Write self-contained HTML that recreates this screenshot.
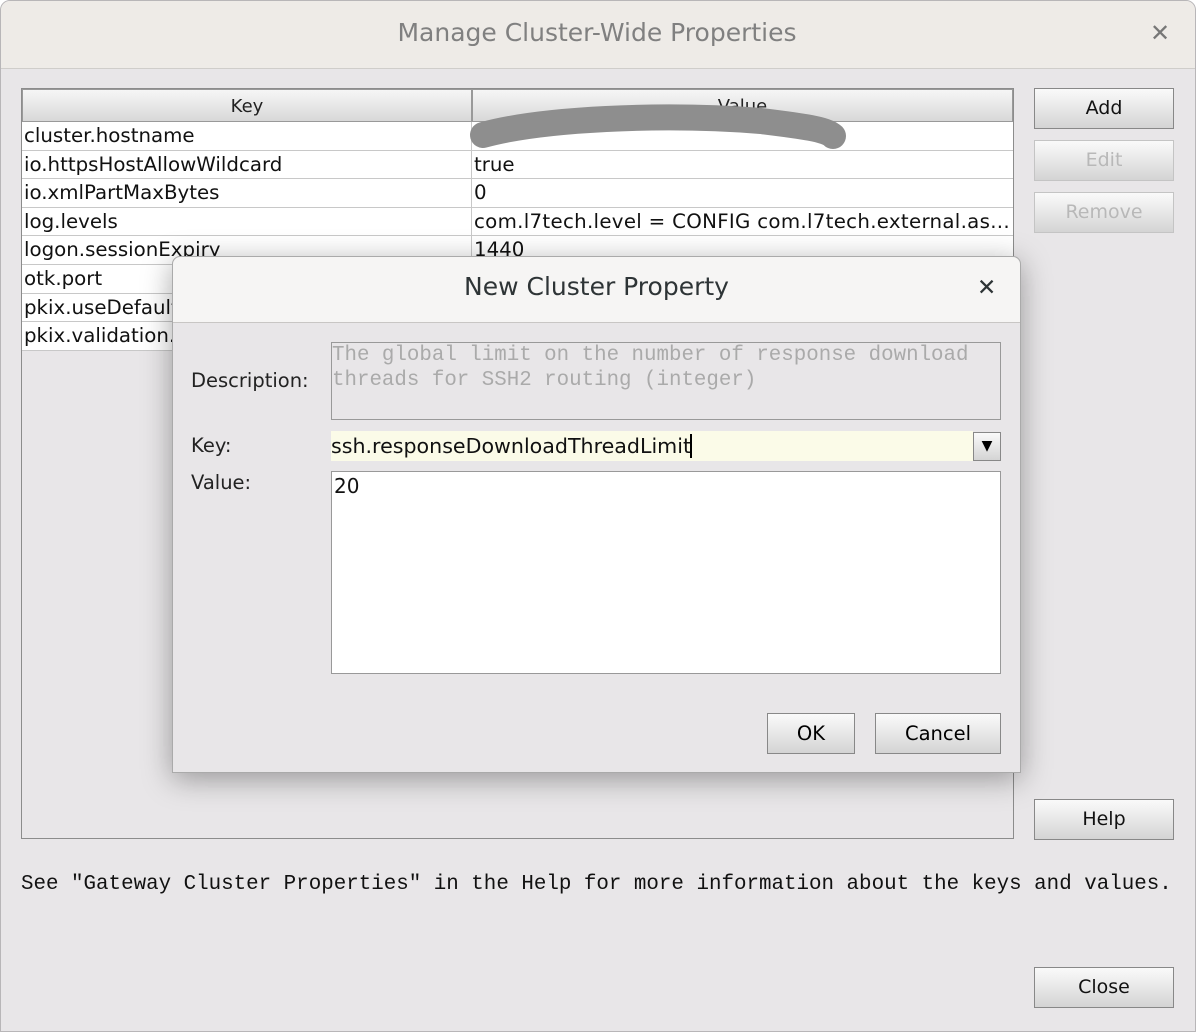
<!DOCTYPE html>
<html><head><meta charset="utf-8"><style>
*{margin:0;padding:0;box-sizing:border-box}
body{width:1196px;height:1032px;background:#fff;font-family:"DejaVu Sans","Liberation Sans",sans-serif;position:relative;overflow:hidden}
.win{position:absolute;left:0;top:0;width:1196px;height:1032px;background:#e8e6e8;border:1px solid #b8b6b8;border-radius:10px 10px 0 0;overflow:hidden}
.tb{position:absolute;left:0;top:0;width:100%;height:68px;background:#eeebe7;border-bottom:1px solid #cfcdca}
.abs{position:absolute}
.tbl{position:absolute;left:20px;top:87px;width:993px;height:751px;border:1px solid #8c8c8c;background:#e8e6e8}
.hdr{position:absolute;top:0;height:33px;background:linear-gradient(#f6f6f6,#d8d8d8);border:1px solid #999;font-size:18px;text-align:center;line-height:33px;color:#222}
.row{position:absolute;left:0;height:28.6px;background:#fff;border-bottom:1px solid #c8c8c8;font-size:19.8px;line-height:27px;color:#111;padding-left:2px;white-space:nowrap;overflow:hidden}
.btn{position:absolute;left:1033px;width:140px;height:41px;border:1px solid #888;background:linear-gradient(#fafafa,#d4d4d4);font-size:19px;text-align:center;line-height:39px;color:#111}
.dis{color:#b8b8b8;border-color:#c4c4c4}
.dlg{position:absolute;left:172px;top:256px;width:849px;height:517px;background:#e8e6e8;border:1px solid #aaa;border-radius:8px 8px 0 0;box-shadow:0 6px 30px rgba(0,0,0,.35)}
</style></head><body>
<div class="win">
<div class="tb"></div>
<div class="abs" style="left:0;width:1192px;top:17px;text-align:center;font-size:25px;color:#808080">Manage Cluster-Wide Properties</div>
<div class="abs" style="left:1149px;top:18px;font-size:24px;color:#777">✕</div>
<div class="tbl">
<div class="hdr" style="left:0;width:450px">Key</div>
<div class="hdr" style="left:450px;width:541px">Value</div>
<div class="row" style="top:33px;width:450px;border-right:1px solid #c8c8c8">cluster.hostname</div><div class="row" style="top:33px;left:450px;width:541px"></div>
<div class="row" style="top:61.6px;width:450px;border-right:1px solid #c8c8c8">io.httpsHostAllowWildcard</div><div class="row" style="top:61.6px;left:450px;width:541px">true</div>
<div class="row" style="top:90.2px;width:450px;border-right:1px solid #c8c8c8">io.xmlPartMaxBytes</div><div class="row" style="top:90.2px;left:450px;width:541px">0</div>
<div class="row" style="top:118.8px;width:450px;border-right:1px solid #c8c8c8">log.levels</div><div class="row" style="top:118.8px;left:450px;width:541px;letter-spacing:0.3px">com.l7tech.level = CONFIG com.l7tech.external.as...</div>
<div class="row" style="top:147.4px;width:450px;border-right:1px solid #c8c8c8">logon.sessionExpiry</div><div class="row" style="top:147.4px;left:450px;width:541px">1440</div>
<div class="row" style="top:176px;width:450px;border-right:1px solid #c8c8c8">otk.port</div><div class="row" style="top:176px;left:450px;width:541px"></div>
<div class="row" style="top:204.6px;width:450px;border-right:1px solid #c8c8c8">pkix.useDefaultTrustAnchors</div><div class="row" style="top:204.6px;left:450px;width:541px"></div>
<div class="row" style="top:233.2px;width:450px;border-right:1px solid #c8c8c8">pkix.validation.x</div><div class="row" style="top:233.2px;left:450px;width:541px"></div>
</div>
<svg class="abs" style="left:460px;top:100px" width="400" height="60"><path d="M22 34 C80 18,200 12,300 20 C340 25,365 28,372 35" stroke="#8e8e8e" stroke-width="26" fill="none" stroke-linecap="round"/></svg>
<div class="btn" style="top:87px">Add</div>
<div class="btn dis" style="top:139px">Edit</div>
<div class="btn dis" style="top:191px">Remove</div>
<div class="btn" style="top:798px">Help</div>
<div class="btn" style="top:966px">Close</div>
<div class="abs" style="left:20px;top:872px;font-family:'Liberation Mono',monospace;font-size:20.85px;color:#111;white-space:nowrap">See "Gateway Cluster Properties" in the Help for more information about the keys and values.</div>
</div>
<div class="dlg">
<div class="abs" style="left:0;top:0;width:847px;height:66px;background:#f6f5f4;border-bottom:1px solid #c8c6c4;border-radius:8px 8px 0 0"></div>
<div class="abs" style="left:0;top:15px;width:847px;text-align:center;font-size:25px;color:#2e3436">New Cluster Property</div>
<div class="abs" style="left:804px;top:18px;font-size:23px;color:#2e3436;font-weight:bold">✕</div>
<div class="abs" style="left:18px;top:112px;font-size:19.5px;color:#222">Description:</div>
<div class="abs" style="left:158px;top:85px;width:670px;height:78px;border:1px solid #999;background:#e8e6e8;font-family:'Liberation Mono',monospace;font-size:20.8px;color:#aaa;line-height:25px;padding-left:0">The global limit on the number of response download<br>threads for SSH2 routing (integer)</div>
<div class="abs" style="left:18px;top:177px;font-size:19.5px;color:#222">Key:</div>
<div class="abs" style="left:158px;top:174px;width:642px;height:30px;background:#fbfbe8;font-size:20.6px;line-height:30px;color:#111">ssh.responseDownloadThreadLimit<span style="border-left:2px solid #000;margin-left:-1px"></span></div>
<div class="abs" style="left:800px;top:175px;width:28px;height:29px;border:1px solid #888;background:linear-gradient(#fafafa,#d4d4d4);text-align:center;line-height:27px;font-size:14px">▼</div>
<div class="abs" style="left:18px;top:214px;font-size:19.5px;color:#222">Value:</div>
<div class="abs" style="left:158px;top:214px;width:670px;height:203px;border:1px solid #999;background:#fff;font-size:20px;padding:2px 2px;color:#111">20</div>
<div class="abs" style="left:594px;top:456px;width:88px;height:41px;border:1px solid #888;background:linear-gradient(#fafafa,#d4d4d4);text-align:center;line-height:39px;font-size:19.5px">OK</div>
<div class="abs" style="left:702px;top:456px;width:126px;height:41px;border:1px solid #888;background:linear-gradient(#fafafa,#d4d4d4);text-align:center;line-height:39px;font-size:19.5px">Cancel</div>
</div>
</body></html>
